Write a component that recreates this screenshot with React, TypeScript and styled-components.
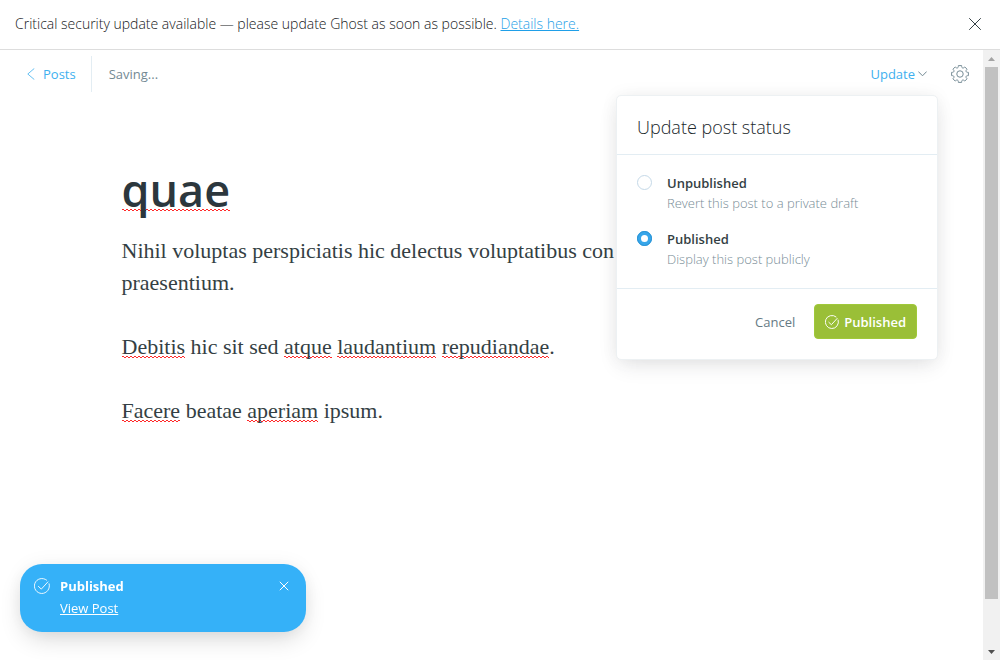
import React, { useState } from "react";
import styled, { createGlobalStyle, css } from "styled-components";

const sans = `"Open Sans", "Noto Sans", sans-serif`;
const serif = `"Liberation Serif", serif`;

const color = {
  text: "#343f44",
  mid: "#738a94",
  line: "#e3edf3",
  blue: "#3eb0ef",
  toast: "#35b1f8",
  green: "#9abf37",
};

const GlobalStyle = createGlobalStyle`
  *, *::before, *::after { box-sizing: border-box; }
  body { margin: 0; background: #fff; color: ${color.text}; font-family: ${sans}; font-size: 13px; line-height: 20px; }
  h1, h2, p { margin: 0; }
`;

const Page = styled.div`
  display: flex;
  flex-direction: column;
  min-height: 100vh;
`;

const PlainButton = styled.button`
  display: inline-flex;
  align-items: center;
  padding: 0;
  border: 0;
  background: none;
  color: inherit;
  font: inherit;
  cursor: pointer;
`;

const Banner = styled.aside`
  display: flex;
  align-items: center;
  justify-content: space-between;
  padding: 14px 18px 15px 15px;
  border-bottom: 1px solid #dddddd;
  color: #15171a;
  font-size: 14px;
  font-weight: 300;

  ${PlainButton} { color: ${color.text}; }
`;

const BannerLink = styled.a`
  color: #1f9fe8;
  text-decoration: underline;
`;

const Workspace = styled.div`
  display: flex;
  flex: 1;
`;

const Editor = styled.main`
  flex: 1;
  min-width: 0;
`;

const Toolbar = styled.header`
  position: relative;
  display: flex;
  align-items: center;
  justify-content: space-between;
  padding: 6px 14px 0 26px;
`;

const ToolbarGroup = styled.div<{ $gap: number }>`
  display: flex;
  align-items: center;
  gap: ${(p) => p.$gap}px;
  color: ${color.mid};
`;

const BackLink = styled.a`
  display: flex;
  align-items: center;
  gap: 7px;
  height: 36px;
  padding-right: 15px;
  border-right: 1px solid ${color.line};
  color: ${color.blue};
  text-decoration: none;
`;

const UpdateButton = styled(PlainButton)`
  gap: 3px;
  color: ${color.blue};
`;

const Post = styled.article`
  max-width: 740px;
  margin: 0 auto;
  padding-top: 66px;
`;

const Title = styled.h1`
  color: #2c373d;
  font-size: 45px;
  font-weight: 600;
  line-height: 64px;
`;

const Body = styled.div`
  display: flex;
  flex-direction: column;
  gap: 32px;
  padding-top: 13px;
  font-family: ${serif};
  font-size: 22px;
  line-height: 32px;
`;

/* A zigzag of two interleaved dashed rows, $rise pixels above the bottom of the text box. */
const Misspelled = styled.span<{ $rise?: number }>`
  background-image:
    repeating-linear-gradient(90deg, #ff2a2a 0 2px, transparent 2px 4px),
    repeating-linear-gradient(90deg, transparent 0 2px, #ff2a2a 2px 4px);
  background-repeat: no-repeat;
  background-size: 100% 1px;
  background-position:
    0 calc(100% - ${(p) => (p.$rise ?? 1) + 1}px),
    0 calc(100% - ${(p) => p.$rise ?? 1}px);
`;

const Menu = styled.form`
  position: absolute;
  top: 45px;
  right: 45px;
  width: 322px;
  border: 1px solid #edf1f3;
  border-radius: 5px;
  background: #fff;
  box-shadow: 0 8px 22px -4px rgba(39, 44, 49, 0.12), 0 0 18px rgba(39, 44, 49, 0.05);
`;

const MenuTitle = styled.h2`
  padding: 19px 20px 15px;
  border-bottom: 1px solid ${color.line};
  color: #20272b;
  font-size: 18px;
  font-weight: 300;
  line-height: 24px;
`;

const Options = styled.div`
  display: flex;
  flex-direction: column;
  gap: 16px;
  padding: 18px 20px 19px;
  border-bottom: 1px solid ${color.line};
`;

const OptionRow = styled.label`
  display: flex;
  align-items: flex-start;
  gap: 15px;
  cursor: pointer;
`;

const Radio = styled.input`
  appearance: none;
  width: 15px;
  height: 15px;
  margin: 2px 0 0;
  border: 1px solid #c5d9e8;
  border-radius: 50%;
  background: #fff;

  &:checked {
    border: 4px solid #37a6ea;
    outline: 1px solid #2b93d4;
    outline-offset: -1px;
  }
`;

const OptionText = styled.span`
  display: flex;
  flex-direction: column;
`;

const OptionName = styled.span`
  font-weight: 600;
`;

const OptionHint = styled.span`
  color: #788c96;
  font-weight: 300;
`;

const MenuFooter = styled.footer`
  display: flex;
  align-items: center;
  justify-content: flex-end;
  gap: 19px;
  padding: 15px 20px 20px;
`;

const CancelButton = styled(PlainButton)`
  color: #667a84;
`;

const ConfirmButton = styled(PlainButton)`
  gap: 5px;
  height: 35px;
  padding: 0 10px;
  border: 1px solid #a0c93a;
  border-radius: 4px;
  background: ${color.green};
  color: #fff;
  font-weight: 600;
`;

const Toast = styled.div`
  position: fixed;
  bottom: 28px;
  left: 20px;
  display: flex;
  align-items: flex-start;
  gap: 10px;
  width: 286px;
  padding: 11px 17px 13px 14px;
  border-radius: 22px;
  background: ${color.toast};
  box-shadow: 0 10px 24px -4px rgba(0, 0, 0, 0.16), 0 0 20px rgba(0, 0, 0, 0.05);
  color: #fff;
  line-height: 22px;

  & > svg { margin-top: 3px; }
  & > button { margin-top: 6px; }
`;

const ToastBody = styled.div`
  flex: 1;
`;

const ToastTitle = styled.strong`
  display: block;
  font-weight: 700;
`;

const ToastLink = styled.a`
  color: #fff;
  text-decoration: underline;
`;

const ScrollTrack = styled.div`
  display: flex;
  flex-direction: column;
  align-items: center;
  width: 17px;
  background: #f1f1f1;
`;

const ScrollArrow = styled.span<{ $down?: boolean }>`
  display: flex;
  align-items: center;
  justify-content: center;
  height: 17px;
  color: #a3a3a3;
  ${(p) =>
    p.$down &&
    css`
      color: #505050;
      svg { transform: rotate(180deg); }
    `}
`;

const ScrollThumb = styled.div`
  flex: 532;
  width: 13px;
  background: #c1c1c1;
`;

const ScrollRest = styled.div`
  flex: 44;
`;

const Cross = ({ size, stroke }: { size: number; stroke: number }) => (
  <svg width={size} height={size} viewBox="0 0 14 14" fill="none" stroke="currentColor" strokeWidth={stroke} strokeLinecap="round">
    <path d="M1.5 1.5l11 11M12.5 1.5l-11 11" />
  </svg>
);

const CheckCircle = ({ size, stroke }: { size: number; stroke: number }) => (
  <svg width={size} height={size} viewBox="0 0 16 16" fill="none" stroke="currentColor" strokeWidth={stroke} strokeLinecap="round" strokeLinejoin="round">
    <path d="M15.1 5.8A7.5 7.5 0 1 1 12.6 2.1" />
    <path d="M4.4 8.4l2.9 2.7 6.6-7.2" />
  </svg>
);

const polar = (degrees: number, radius: number) => {
  const a = (degrees * Math.PI) / 180;
  return `${(12 + radius * Math.cos(a)).toFixed(2)} ${(12 + radius * Math.sin(a)).toFixed(2)}`;
};

/* Eight flat teeth joined by rounded notches. */
const gearPath =
  Array.from({ length: 8 }, (_, i) => {
    const at = i * 45;
    return `${i ? "L" : "M"}${polar(at - 11, 11.4)}L${polar(at + 11, 11.4)}C${polar(at + 14, 8)} ${polar(at + 31, 8)} ${polar(at + 34, 11.4)}`;
  }).join("") + "Z";

const Gear = () => (
  <svg width="18" height="18" viewBox="0 0 24 24" fill="none" stroke="currentColor" strokeWidth="1.3" strokeLinejoin="round">
    <circle cx="12" cy="12" r="4.3" />
    <path d={gearPath} />
  </svg>
);

const Option = ({ name, hint, checked, onSelect }: { name: string; hint: string; checked: boolean; onSelect: () => void }) => (
  <OptionRow>
    <Radio type="radio" name="status" checked={checked} onChange={onSelect} />
    <OptionText>
      <OptionName>{name}</OptionName>
      <OptionHint>{hint}</OptionHint>
    </OptionText>
  </OptionRow>
);

export default function App() {
  const [status, setStatus] = useState("published");

  return (
    <Page>
      <GlobalStyle />
      <Banner>
        <p>
          Critical security update available — please update Ghost as soon as possible.{" "}
          <BannerLink href="#details">Details here.</BannerLink>
        </p>
        <PlainButton type="button" aria-label="Dismiss">
          <Cross size={14} stroke={1} />
        </PlainButton>
      </Banner>
      <Workspace>
        <Editor>
          <Toolbar>
            <ToolbarGroup $gap={17}>
              <BackLink href="#posts">
                <svg width="10" height="12" viewBox="0 0 10 12" fill="none" stroke="currentColor" strokeWidth="0.8" strokeLinecap="round" strokeLinejoin="round">
                  <path d="M8 .7L1.8 6 8 11.3" />
                </svg>
                Posts
              </BackLink>
              <span>Saving...</span>
            </ToolbarGroup>
            <ToolbarGroup $gap={24}>
              <UpdateButton type="button">
                Update
                <svg width="9" height="6" viewBox="0 0 9 6" fill="none" stroke={color.mid} strokeLinecap="round" strokeLinejoin="round">
                  <path d="M.6.8l3.9 4L8.4.8" />
                </svg>
              </UpdateButton>
              <PlainButton type="button" aria-label="Settings">
                <Gear />
              </PlainButton>
            </ToolbarGroup>
            <Menu onSubmit={(e) => e.preventDefault()}>
              <MenuTitle>Update post status</MenuTitle>
              <Options>
                <Option
                  name="Unpublished"
                  hint="Revert this post to a private draft"
                  checked={status === "draft"}
                  onSelect={() => setStatus("draft")}
                />
                <Option
                  name="Published"
                  hint="Display this post publicly"
                  checked={status === "published"}
                  onSelect={() => setStatus("published")}
                />
              </Options>
              <MenuFooter>
                <CancelButton type="button">Cancel</CancelButton>
                <ConfirmButton type="submit">
                  <CheckCircle size={14} stroke={1.1} />
                  Published
                </ConfirmButton>
              </MenuFooter>
            </Menu>
          </Toolbar>
          <Post>
            <Title>
              <Misspelled $rise={9}>quae</Misspelled>
            </Title>
            <Body>
              <p>
                Nihil voluptas perspiciatis hic delectus voluptatibus con
                <br />
                praesentium.
              </p>
              <p>
                <Misspelled>Debitis</Misspelled> hic sit sed <Misspelled>atque</Misspelled> <Misspelled>laudantium</Misspelled>{" "}
                <Misspelled>repudiandae</Misspelled>.
              </p>
              <p>
                <Misspelled>Facere</Misspelled> beatae <Misspelled>aperiam</Misspelled> ipsum.
              </p>
            </Body>
          </Post>
        </Editor>
        <ScrollTrack aria-hidden="true">
          <ScrollArrow>
            <svg width="7" height="4" viewBox="0 0 7 4" fill="currentColor"><path d="M3.5 0L7 4H0z" /></svg>
          </ScrollArrow>
          <ScrollThumb />
          <ScrollRest />
          <ScrollArrow $down>
            <svg width="7" height="4" viewBox="0 0 7 4" fill="currentColor"><path d="M3.5 0L7 4H0z" /></svg>
          </ScrollArrow>
        </ScrollTrack>
      </Workspace>
      <Toast role="status">
        <CheckCircle size={16} stroke={0.9} />
        <ToastBody>
          <ToastTitle>Published</ToastTitle>
          <ToastLink href="#view">View Post</ToastLink>
        </ToastBody>
        <PlainButton type="button" aria-label="Close">
          <Cross size={10} stroke={1.4} />
        </PlainButton>
      </Toast>
    </Page>
  );
}
